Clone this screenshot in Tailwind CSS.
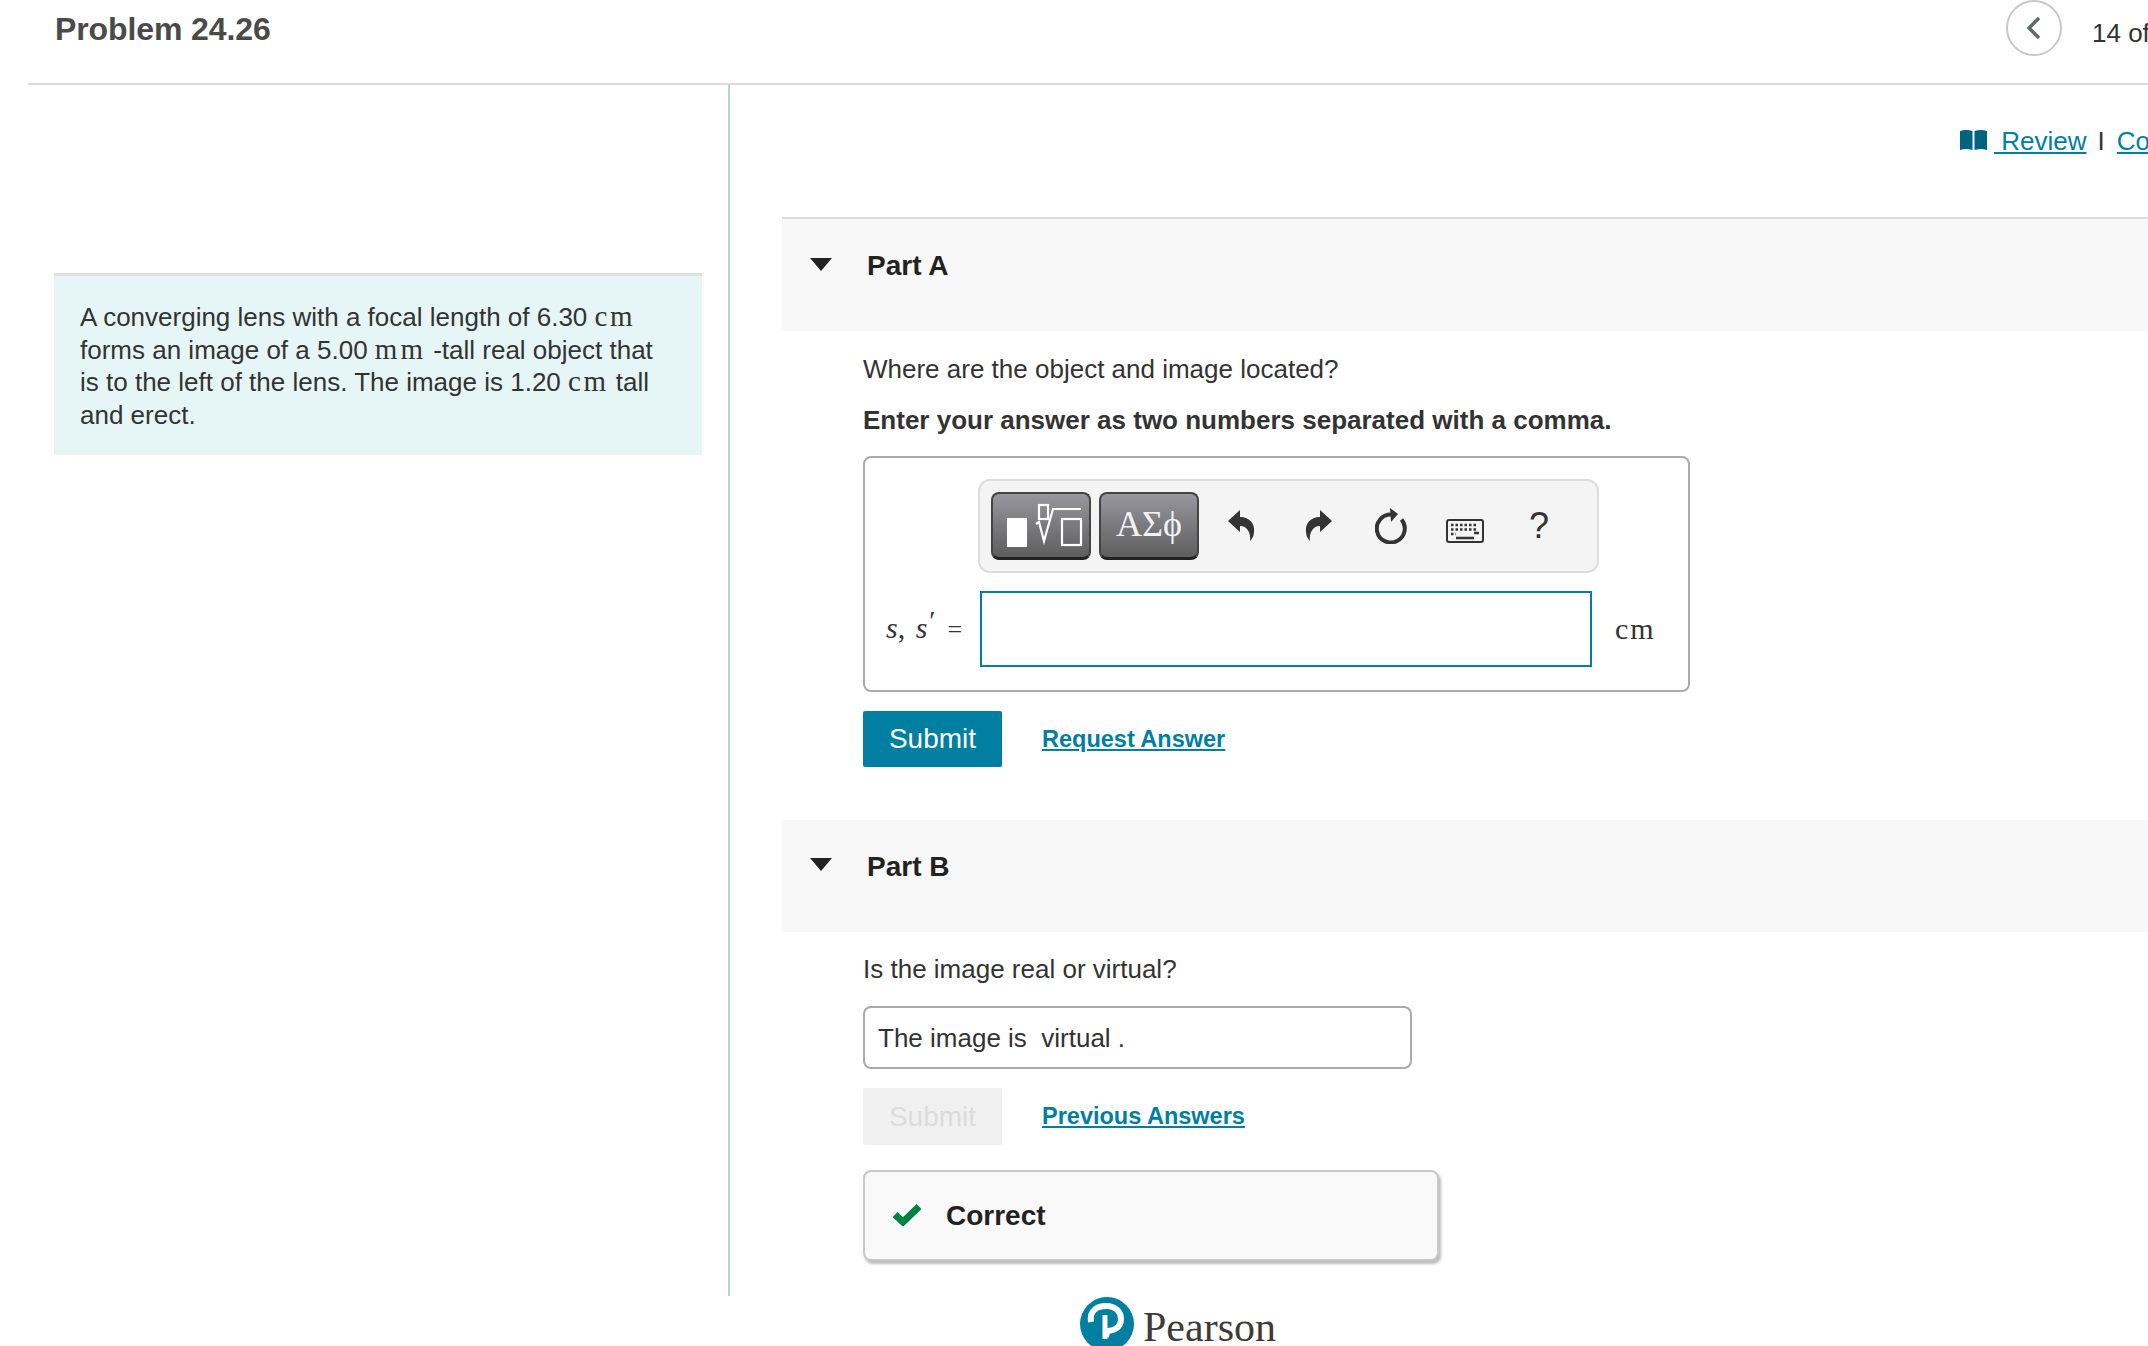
<!DOCTYPE html>
<html lang="en">

<head>
    <meta charset="UTF-8">
    <title>Problem 24.26</title>
    <script src="https://cdn.jsdelivr.net/npm/@tailwindcss/browser@4"></script>
</head>

<body class="bg-white w-[2148px] h-[1346px] overflow-hidden font-['Liberation_Sans',Arial,sans-serif] text-[#333] text-[26px] leading-[36px]">
    <!-- top bar -->
    <header class="ml-[28px] h-[85px] border-b-2 border-[#ddd] flex justify-between whitespace-nowrap overflow-hidden">
        <h1 class="ml-[27px] mt-[10px] text-[32px] leading-[38px] font-bold text-[#4a4a4a] tracking-[-0.1px]">Problem 24.26</h1>
        <div class="flex items-start">
            <div class="w-[56px] h-[56px] rounded-full border-2 border-[#c8c8c8] flex items-center justify-center">
                <svg width="20" height="26" viewBox="0 0 20 26" fill="none" stroke="#5f6b6b" stroke-width="3.5"><path d="M15 3 L5 13 L15 23"/></svg>
            </div>
            <span class="ml-[30px] mt-[15px] text-[26px] w-[56px] overflow-hidden">14 of 25</span>
        </div>
    </header>

    <main class="flex h-[1211px]">
        <!-- left: problem statement -->
        <section class="w-[728px] shrink-0 pl-[54px] pr-[26px] pt-[188px]">
            <div class="h-[182px] bg-[#e6f6f6] border-t-[3px] border-[#e0e0e0] pl-[26px] pr-[20px] pt-[25px] text-[26px] leading-[32.5px] whitespace-nowrap">
                A converging lens with a focal length of 6.30 <span class="font-['Liberation_Serif',serif] text-[29px] leading-none tracking-[2.5px]">cm</span><br>
                forms an image of a 5.00 <span class="font-['Liberation_Serif',serif] text-[29px] leading-none tracking-[3px]">mm</span> -tall real object that<br>
                is to the left of the lens. The image is 1.20 <span class="font-['Liberation_Serif',serif] text-[29px] leading-none tracking-[2.5px]">cm</span> tall<br>
                and erect.
            </div>
        </section>

        <!-- right: parts -->
        <section class="flex-1 min-w-0 border-l-2 border-[#b9cfe2] pl-[52px] overflow-hidden">
            <div class="h-[132px] pt-[38px] pl-[1178px] flex items-start whitespace-nowrap text-[#007fa3]">
                <svg class="mt-[7px] shrink-0" width="27" height="21" viewBox="0 0 27 21" fill="#00637f"><path d="M0 1 Q6 -1 12.5 1 V20 Q6 18 0 20 Z M14.5 1 Q21 -1 27 1 V20 Q21 18 14.5 20 Z"/></svg>
                <a class="underline pl-[7px]">&nbsp;Review</a>
                <span class="ml-[11px] mr-[12px] text-[#333]">I</span>
                <a class="underline">Constants</a>
            </div>

            <div class="h-[114px] border-t-2 border-[#ddd] bg-[#f8f8f8] flex items-start pl-[28px] pt-[31px]">
                <svg class="mt-[8px]" width="22" height="13" viewBox="0 0 22 13" fill="#222"><path d="M0 0 H22 L11 13 Z"/></svg>
                <h2 class="ml-[35px] text-[28px] leading-[32px] font-bold text-[#222]">Part A</h2>
            </div>

            <div class="pl-[81px] pt-[20px]">
                <p>Where are the object and image located?</p>
                <p class="mt-[15px] font-bold">Enter your answer as two numbers separated with a comma.</p>

                <div class="mt-[18px] w-[827px] h-[236px] border-2 border-[#aaa] rounded-lg">
                    <div class="ml-[113px] mt-[21px] w-[621px] h-[94px] bg-[#f4f4f4] border-2 border-[#ddd] rounded-xl flex items-center pl-[11px] pb-[1px]">
                        <div class="w-[100px] h-[68px] rounded-lg border-2 border-[#444] border-b-[3px] border-b-[#222] bg-linear-to-b from-[#98979f] to-[#5e5e5e]">
                            <svg width="96" height="63" viewBox="2 2 96 63" fill="none" stroke="#fff" stroke-width="2.2"><rect x="16" y="26" width="20" height="29" fill="#fff" stroke="none"/><rect x="48" y="13" width="9" height="14"/><path d="M45 32 L48 30 L53 49 L62 17 H90"/><rect x="71" y="27" width="19" height="26"/></svg>
                        </div>
                        <div class="ml-[8px] pb-[3px] w-[100px] h-[68px] rounded-lg border-2 border-[#444] border-b-[3px] border-b-[#222] bg-linear-to-b from-[#98979f] to-[#5e5e5e] flex items-center justify-center text-[#f2f2f2] text-[36px] font-['Liberation_Serif',serif]">ΑΣϕ</div>
                        <svg class="ml-[29px]" width="27" height="31" viewBox="0 0 27 31" fill="#333"><path d="M0 11 L12 0 V7 C22 7 27 14 26 22 C26 26 24 29 22 31 C23 24 20 16 12 16 V22 Z"/></svg>
                        <svg class="ml-[50px]" width="27" height="31" viewBox="0 0 27 31" fill="#333"><path d="M27 11 L15 0 V7 C5 7 0 14 1 22 C1 26 3 29 5 31 C4 24 7 16 15 16 V22 Z"/></svg>
                        <svg class="ml-[43px]" width="32" height="36" viewBox="0 0 32 36" fill="none"><path d="M26.5 11.5 A14 14 0 1 1 16 6.5" stroke="#333" stroke-width="4"/><path d="M15 0 L23 6 L16 14 Z" fill="#333"/></svg>
                        <svg class="ml-[39px] mt-[11px]" width="38" height="24" viewBox="0 0 38 24"><rect x="1" y="1" width="36" height="22" rx="2" fill="#f4f4f4" stroke="#333" stroke-width="2"/><path d="M5 6 H32 M5 10.5 H32 M5 15 H10" stroke="#333" stroke-width="2.4" stroke-dasharray="2.5 2"/><path d="M10 19 H28 M28 14 H33" stroke="#333" stroke-width="2.4"/></svg>
                        <span class="ml-[45px] text-[36px] leading-none">?</span>
                    </div>

                    <div class="mt-[18px] flex items-center">
                        <span class="pl-[21px] w-[115px] text-[30px] font-['Liberation_Serif',serif] whitespace-nowrap"><i>s</i>, <i class="ml-[3px]">s</i><i class="relative -top-[8px] text-[28px]">′</i><span class="ml-[14px] text-[26px]">=</span></span>
                        <input type="text" class="w-[612px] h-[76px] border-2 border-[#007fa3] bg-white outline-none">
                        <span class="ml-[23px] text-[30px] tracking-[2px] font-['Liberation_Serif',serif]">cm</span>
                    </div>
                </div>

                <div class="mt-[19px] flex items-center">
                    <button class="w-[139px] h-[56px] bg-[#007fa3] text-white text-[28px] rounded-[2px]">Submit</button>
                    <a class="ml-[40px] text-[23.5px] font-bold text-[#007fa3] underline">Request Answer</a>
                </div>
            </div>

            <div class="mt-[53px] h-[112px] bg-[#f8f8f8] flex items-start pl-[28px] pt-[31px]">
                <svg class="mt-[7px]" width="22" height="13" viewBox="0 0 22 13" fill="#222"><path d="M0 0 H22 L11 13 Z"/></svg>
                <h2 class="ml-[35px] text-[28px] leading-[32px] font-bold text-[#222]">Part B</h2>
            </div>

            <div class="pl-[81px] pt-[19px]">
                <p>Is the image real or virtual?</p>
                <div class="mt-[19px] w-[549px] h-[63px] border-2 border-[#aaa] rounded-lg pl-[13px] flex items-center whitespace-pre">The image is  virtual .</div>
                <div class="mt-[19px] flex items-center">
                    <button class="w-[139px] h-[57px] bg-[#f0f0f0] text-[#dcdcdc] text-[28px] rounded-[2px]">Submit</button>
                    <a class="ml-[40px] -mt-[2px] text-[23.5px] font-bold text-[#007fa3] underline">Previous Answers</a>
                </div>
                <div class="mt-[25px] w-[576px] h-[91px] bg-[#f9f9f9] border-2 border-[#c8c8c8] rounded-lg shadow-[2px_3px_3px_#bbb] flex items-center pl-[28px]">
                    <svg class="-mt-[2px]" width="28" height="22" viewBox="0 0 28 22" fill="none" stroke="#00833e" stroke-width="7"><path d="M2 10.5 L10 18 L26 2.5"/></svg>
                    <span class="ml-[25px] text-[28px] font-bold text-[#222]">Correct</span>
                </div>
            </div>
        </section>
    </main>

    <!-- footer logo, cut off by the window -->
    <footer class="pl-[1080px] pt-[1px] flex items-start">
        <svg width="54" height="54" viewBox="0 0 54 54"><circle cx="27" cy="27" r="27" fill="#007fa3"/><path d="M11 25 C9 13 18 9 26 9 C36 9 41 15 41 22 C41 31 33 34 27 34 L26 40" fill="none" stroke="#fff" stroke-width="6"/><path d="M25 18 V42" stroke="#fff" stroke-width="5"/></svg>
        <span class="ml-[9px] mt-[8px] text-[42px] leading-[44px] font-['Liberation_Serif',serif] text-[#3f3a36]">Pearson</span>
    </footer>
</body>

</html>
